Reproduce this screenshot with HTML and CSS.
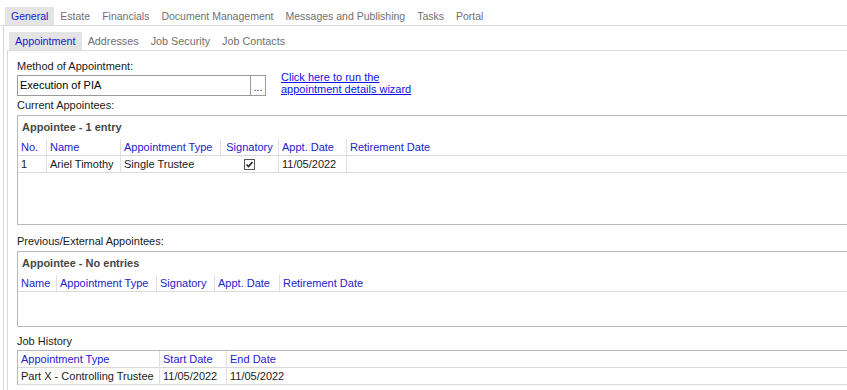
FILE: index.html
```html
<!DOCTYPE html>
<html lang="en">
<head>
    <meta charset="UTF-8">
    <title>Appointment</title>
    <link rel="stylesheet" href="styles.css">
</head>
<body>

    <!-- Main tabs -->
    <div class="tabs main-tabs">
        <span class="tab active">General</span>
        <span class="tab">Estate</span>
        <span class="tab">Financials</span>
        <span class="tab">Document Management</span>
        <span class="tab">Messages and Publishing</span>
        <span class="tab">Tasks</span>
        <span class="tab">Portal</span>
    </div>

    <div class="panel">
        <!-- Sub tabs -->
        <div class="tabs sub-tabs">
            <span class="tab active">Appointment</span>
            <span class="tab">Addresses</span>
            <span class="tab">Job Security</span>
            <span class="tab">Job Contacts</span>
        </div>

        <div class="subpanel">
            <div class="label first">Method of Appointment:</div>
            <div class="method-row">
                <div class="combo">
                    <span class="combo-text">Execution of PIA</span>
                    <span class="combo-btn">...</span>
                </div>
                <a class="wizard-link" href="#">Click here to run the appointment details wizard</a>
            </div>

            <div class="label">Current Appointees:</div>
            <div class="grid-box current">
                <div class="grid-title">Appointee - 1 entry</div>
                <div class="grid-row head">
                    <span class="cell">No.</span>
                    <span class="cell">Name</span>
                    <span class="cell">Appointment Type</span>
                    <span class="cell center">Signatory</span>
                    <span class="cell">Appt. Date</span>
                    <span class="cell last">Retirement Date</span>
                </div>
                <div class="grid-row">
                    <span class="cell">1</span>
                    <span class="cell">Ariel Timothy</span>
                    <span class="cell no-line">Single Trustee</span>
                    <span class="cell center">
                        <svg class="check" width="11" height="11" viewBox="0 0 11 11">
                            <rect x="0.5" y="0.5" width="10" height="10" fill="#fff" stroke="#555"/>
                            <path d="M2.5 5.5 L4.5 7.5 L8.5 3" fill="none" stroke="#222" stroke-width="1.6"/>
                        </svg>
                    </span>
                    <span class="cell">11/05/2022</span>
                    <span class="cell last"></span>
                </div>
            </div>

            <div class="label gap">Previous/External Appointees:</div>
            <div class="grid-box previous">
                <div class="grid-title">Appointee - No entries</div>
                <div class="grid-row head">
                    <span class="cell">Name</span>
                    <span class="cell">Appointment Type</span>
                    <span class="cell">Signatory</span>
                    <span class="cell">Appt. Date</span>
                    <span class="cell last">Retirement Date</span>
                </div>
            </div>

            <div class="label history-label">Job History</div>
            <div class="history">
                <div class="grid-row head">
                    <span class="cell">Appointment Type</span>
                    <span class="cell">Start Date</span>
                    <span class="cell last">End Date</span>
                </div>
                <div class="grid-row">
                    <span class="cell">Part X - Controlling Trustee</span>
                    <span class="cell">11/05/2022</span>
                    <span class="cell last">11/05/2022</span>
                </div>
            </div>
        </div>
    </div>

</body>
</html>
```

FILE: styles.css
```css
body {
    margin: 0;
    height: 100vh;
    overflow: hidden;
    display: flex;
    flex-direction: column;
    background: #fff;
    font-family: 'Liberation Sans', Arial, sans-serif;
    font-size: 11px;
    color: #1a1a1a;
}

/* Tabs */
.tabs {
    display: flex;
    border-bottom: 1px solid #dcdcdc;
}

.main-tabs {
    padding: 7px 0 0 5px;
}

.sub-tabs {
    padding-left: 2px;
}

.tab {
    height: 18px;
    line-height: 18px;
    padding: 0 6px;
    font-size: 10.5px;
    color: #707070;
}

.sub-tabs .tab {
    font-size: 10.8px;
}

.tab.active {
    background: #e4e4e4;
    color: #1a1acc;
}

.panel {
    flex: 1;
    display: flex;
    flex-direction: column;
    margin-left: 3px;
    border-left: 1px solid #d6d6d6;
    padding: 6px 0 0 3px;
}

.subpanel {
    flex: 1;
    border-left: 1px solid #d6d6d6;
    padding-left: 9px;
}

/* Labels */
.label {
    height: 14px;
    line-height: 14px;
    margin-top: 2px;
}

.label.first {
    margin-top: 8px;
}

.label.gap {
    margin-top: 9px;
}

.label.history-label {
    margin-top: 7px;
}

/* Method of appointment */
.method-row {
    display: flex;
    align-items: flex-start;
    margin-top: 2px;
}

.combo {
    display: flex;
    width: 249px;
    height: 21px;
    box-sizing: border-box;
    border: 1px solid #9a9a9a;
}

.combo-text {
    flex: 1;
    line-height: 19px;
    padding-left: 2px;
    color: #000;
}

.combo-btn {
    width: 14px;
    border-left: 1px solid #9a9a9a;
    text-align: center;
    line-height: 22px;
    color: #333;
}

.wizard-link {
    width: 132px;
    margin: -4px 0 0 15px;
    line-height: 12px;
    color: #1010ee;
}

/* Grids */
.grid-box {
    margin: 3px -20px 0 0;
    box-sizing: border-box;
    border: 1px solid #b8b8b8;
}

.grid-box.current {
    height: 110px;
}

.grid-box.previous {
    height: 76px;
}

.grid-title {
    height: 23px;
    line-height: 23px;
    padding-left: 4px;
    font-weight: bold;
    color: #474747;
}

.grid-row {
    display: grid;
    height: 17px;
    box-sizing: border-box;
    border-bottom: 1px solid #dadada;
}

.grid-row.head .cell {
    color: #2222cc;
}

.current .grid-row {
    grid-template-columns: 29px 74px 100px 58px 68px 1fr;
}

.previous .grid-row {
    grid-template-columns: 39px 100px 58px 65px 1fr;
}

.history .grid-row {
    grid-template-columns: 142px 67px 1fr;
}

.cell {
    line-height: 16px;
    padding-left: 3px;
    border-right: 1px solid #e0e0e0;
    white-space: nowrap;
    overflow: hidden;
}

.cell.last {
    border-right: none;
}

.grid-row:not(.head) .cell.no-line {
    border-right-color: transparent;
}

.cell.center {
    padding-left: 0;
    text-align: center;
}

.check {
    vertical-align: -2px;
}

/* Job history */
.history {
    margin: 2px -20px 0 0;
    border-top: 1px solid #b8b8b8;
    border-left: 1px solid #b8b8b8;
}
```
